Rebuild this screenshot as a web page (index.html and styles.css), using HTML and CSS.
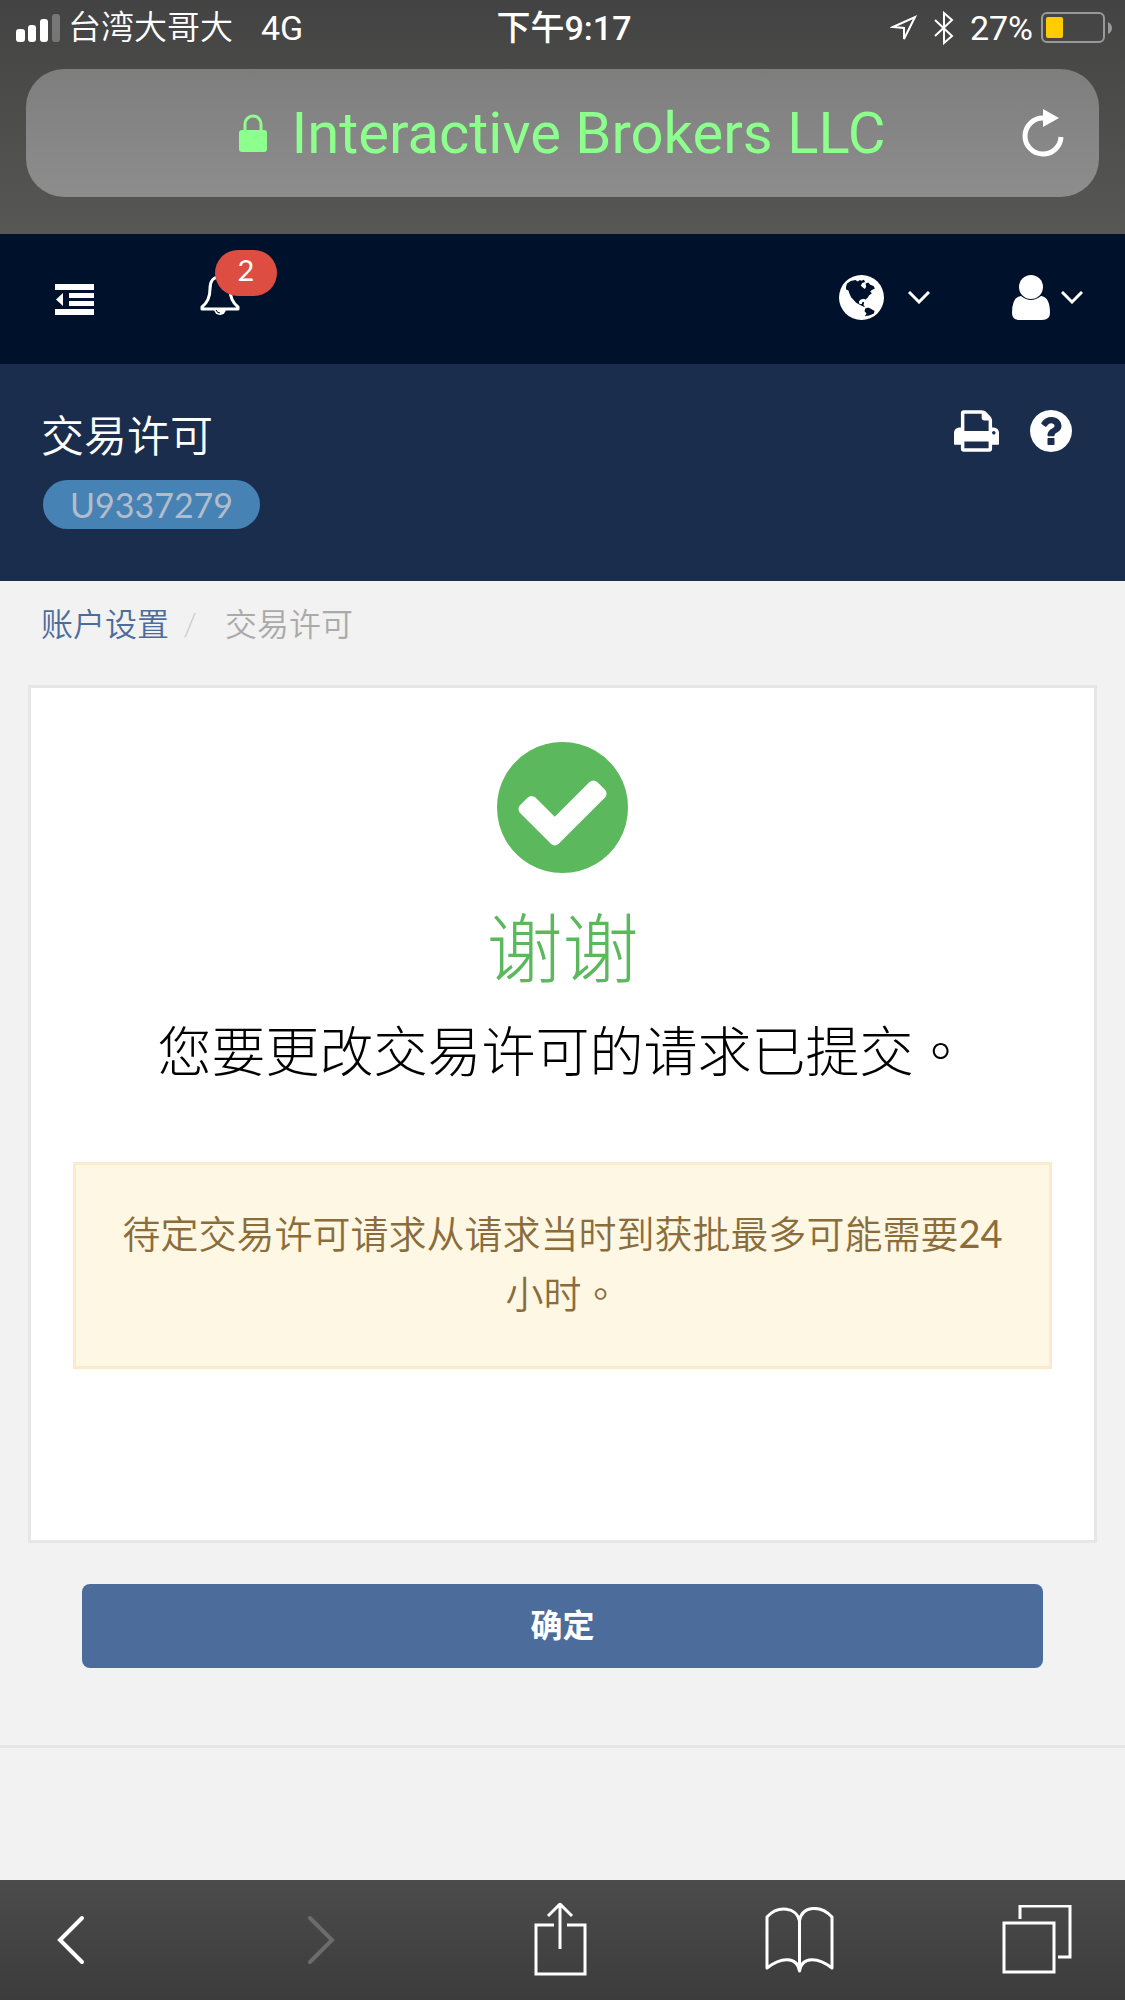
FILE: index.html
```
<!DOCTYPE html>
<html lang="zh-Hant">
<head>
  <meta charset="UTF-8">
  <meta name="viewport" content="width=device-width, initial-scale=1.0">
  <title>交易许可</title>
  <link rel="stylesheet" href="styles.css">
</head>
<body>

<header class="browser-top">
  <div class="status-bar">
    <div class="status-left">
      <svg class="signal" width="44" height="28" viewBox="0 0 44 28" fill="#fff">
        <rect x="0" y="15" width="9" height="13" rx="3"/>
        <rect x="12" y="11" width="8" height="17" rx="3"/>
        <rect x="24" y="5" width="8" height="23" rx="3"/>
        <rect x="36" y="0" width="8" height="28" rx="3" fill="#777"/>
      </svg>
      <span class="carrier">台湾大哥大</span>
      <span class="network">4G</span>
    </div>
    <div class="time">下午9:17</div>
    <div class="status-right">
      <svg width="28" height="28" viewBox="0 0 28 28" fill="none" stroke="#fff" stroke-width="2">
        <path d="M3 13L25 3L14 25L14 14Z"/>
      </svg>
      <svg width="20" height="34" viewBox="0 0 20 34" fill="none" stroke="#fff" stroke-width="2">
        <path d="M1 9L18 25L10 32V2L18 9L1 25"/>
      </svg>
      <span class="battery-text">27%</span>
      <svg class="battery" width="71" height="32" viewBox="0 0 71 32">
        <rect x="1" y="1" width="62" height="29" rx="5" fill="none" stroke="#999" stroke-width="2"/>
        <rect x="5" y="5" width="17" height="21" rx="2" fill="#fc0"/>
        <path d="M67 10q4 2 4 6t-4 6z" fill="#999"/>
      </svg>
    </div>
  </div>

  <div class="address-bar">
    <div class="site">
      <svg width="28" height="38" viewBox="0 0 28 38">
        <rect x="0" y="16" width="28" height="22" rx="3" fill="#8cff8c"/>
        <path d="M6 17V10a8 8 0 0 1 16 0v7" fill="none" stroke="#8cff8c" stroke-width="3"/>
      </svg>
      <span>Interactive Brokers LLC</span>
    </div>
    <button class="icon-btn reload" type="button" aria-label="重新载入">
      <svg width="42" height="48" viewBox="0 0 42 48">
        <path d="M39 28A18 18 0 1 1 21 9" fill="none" stroke="#fff" stroke-width="5"/>
        <path d="M21 0L37 9L21 18Z" fill="#fff"/>
      </svg>
    </button>
  </div>
</header>

<nav class="navbar">
  <button class="icon-btn" type="button" aria-label="菜单">
    <svg width="39" height="31" viewBox="0 0 39 31" fill="#fff">
      <path d="M0 0h39v6H0zM14 9h25v5H14zM14 17h25v5H14zM0 25h39v6H0zM8 9v13L1 15.500z"/>
    </svg>
  </button>
  <button class="icon-btn bell" type="button" aria-label="通知">
    <svg width="40" height="44" viewBox="0 0 40 44">
      <path d="M20 5C12 5 10 10 10 17C10 26 7 31 2 35V37H38V35C33 31 30 26 30 17C30 10 28 5 20 5Z" fill="none" stroke="#fff" stroke-width="3" stroke-linejoin="round"/>
      <path d="M14 37h12a6 6 0 0 1-12 0z" fill="#fff"/>
      <path d="M16 38q1 3 4 3" fill="none" stroke="#00122b" stroke-width="1"/>
      <path d="M20 2v3" stroke="#fff" stroke-width="4" stroke-linecap="round"/>
    </svg>
    <span class="badge">2</span>
  </button>
  <button class="icon-btn language" type="button" aria-label="语言">
    <svg width="45" height="45" viewBox="115 133 134 134">
      <circle cx="182" cy="200" r="67" fill="#fff"/>
      <path fill="#00122b" d="M136 168L139 158L150 151L164 148L171 152L177 148L182 150L189 147L193 154L184 157L180 165L186 170L192 175L196 168L194 158L202 155L208 162L218 166L222 173L213 178L208 182L213 187L205 193L200 201L193 207L190 204L180 206L174 212L176 219L183 219L185 213L190 214L188 222L193 229L187 227L178 222L166 216L158 207L151 199L146 188L143 179L136 176Z"/>
      <path fill="#00122b" d="M193 233L202 230L211 234L221 240L219 248L207 253L192 256L197 248L191 241Z"/>
    </svg>
    <svg width="22" height="13" viewBox="0 0 22 13" fill="none" stroke="#fff" stroke-width="3"><path d="M1 1l10 10L21 1"/></svg>
  </button>
  <button class="icon-btn user" type="button" aria-label="用户">
    <svg width="38" height="45" viewBox="0 0 38 45" fill="#fff">
      <circle cx="19" cy="12" r="12"/>
      <path d="M9 21q10 8 20 0q9 1 9 17q0 7-8 7H8q-8 0-8-7q0-16 9-17z"/>
    </svg>
    <svg width="22" height="13" viewBox="0 0 22 13" fill="none" stroke="#fff" stroke-width="3"><path d="M1 1l10 10L21 1"/></svg>
  </button>
</nav>

<section class="page-header">
  <div>
    <h1>交易许可</h1>
    <span class="account">U9337279</span>
  </div>
  <div class="page-tools">
    <button class="icon-btn" type="button" aria-label="打印">
      <svg width="45" height="42" viewBox="0 0 1664 1536" fill="#fff">
        <path d="M384 1408h896v-256h-896v256zm0-640h896v-384h-160q-40 0-68-28t-28-68v-160h-640v640zm1152 64q0-26-19-45t-45-19-45 19-19 45 19 45 45 19 45-19 19-45zm128 0v416q0 13-9.500 22.500t-22.500 9.500h-224v160q0 40-28 68t-68 28h-960q-40 0-68-28t-28-68v-160h-224q-13 0-22.500-9.500t-9.500-22.500v-416q0-79 56.500-135.500t135.500-56.500h64v-544q0-40 28-68t68-28h672q40 0 88 20t76 48l152 152q28 28 48 76t20 88v256h64q79 0 135.500 56.500t56.500 135.500z"/>
      </svg>
    </button>
    <button class="icon-btn" type="button" aria-label="帮助">
      <svg width="42" height="42" viewBox="0 0 1536 1536" fill="#fff">
        <path d="M896 1248v-192q0-14-9-23t-23-9h-192q-14 0-23 9t-9 23v192q0 14 9 23t23 9h192q14 0 23-9t9-23zm256-672q0-88-55.500-163t-138.500-116-170-41q-243 0-371 213-15 24 8 42l132 100q7 6 19 6 16 0 25-12 53-68 86-92 34-24 86-24 48 0 85.500 26t37.500 59q0 38-20 61t-68 45q-63 28-115.500 86.500t-52.500 125.500v36q0 14 9 23t23 9h192q14 0 23-9t9-23q0-19 21.500-49.500t54.500-49.500q32-18 49-28.500t46-35 44.500-48 28-60.500 12.500-81zm384 192q0 209-103 385.500t-279.500 279.500-385.500 103-385.500-103-279.500-279.500-103-385.500 103-385.500 279.500-279.500 385.500-103 385.500 103 279.500 279.500 103 385.500z"/>
      </svg>
    </button>
  </div>
</section>

<main>
  <div class="breadcrumb">
    <a href="#">账户设置</a>
    <span class="slash">/</span>
    <span>交易许可</span>
  </div>

  <div class="card">
    <svg class="check" width="131" height="131" viewBox="0 0 1536 1536" fill="#5cb85c">
      <path d="M1284 606q0-28-18-46l-91-90q-19-19-45-19t-45 19l-408 407-226-226q-19-19-45-19t-45 19l-91 90q-18 18-18 46 0 27 18 45l362 362q19 19 45 19 27 0 46-19l543-543q18-18 18-45zm252 162q0 209-103 385.500t-279.500 279.500-385.500 103-385.500-103-279.500-279.500-103-385.500 103-385.500 279.500-279.500 385.500-103 385.500 103 279.500 279.500 103 385.500z"/>
    </svg>
    <h2>谢谢</h2>
    <p class="message">您要更改交易许可的请求已提交。</p>
    <div class="alert">待定交易许可请求从请求当时到获批最多可能需要<span class="hours">24</span>小时。</div>
  </div>

  <div class="actions">
    <button class="btn-primary" type="button">确定</button>
  </div>
</main>

<footer class="toolbar">
  <button class="icon-btn" type="button" aria-label="后退">
    <svg width="28" height="52" viewBox="0 0 28 52" fill="none" stroke="#fff" stroke-width="4" stroke-linecap="round"><path d="M25 4L3 26L25 48"/></svg>
  </button>
  <button class="icon-btn" type="button" aria-label="前进" disabled>
    <svg width="28" height="52" viewBox="0 0 28 52" fill="none" stroke="#6c6c6c" stroke-width="4" stroke-linecap="round"><path d="M3 4L25 26L3 48"/></svg>
  </button>
  <button class="icon-btn" type="button" aria-label="分享">
    <svg width="53" height="74" viewBox="0 0 53 74" fill="none" stroke="#fff" stroke-width="3">
      <path d="M20 22H2V71H51V22H33M26 1V46M14 13L26 1L38 13"/>
    </svg>
  </button>
  <button class="icon-btn" type="button" aria-label="书签">
    <svg width="69" height="66" viewBox="0 0 69 66" fill="none" stroke="#fff" stroke-width="3" stroke-linejoin="round">
      <path d="M34.500 14V64C32 49 16 50 2 61V10C13-2 32 0 34.500 14C37-2 56-2 67 10V61C53 50 37 49 34.500 64"/>
    </svg>
  </button>
  <button class="icon-btn" type="button" aria-label="标签页">
    <svg width="70" height="70" viewBox="0 0 70 70" fill="none" stroke="#fff" stroke-width="3">
      <path d="M2 18H52V67H2ZM18 14V1H68V52H56"/>
    </svg>
  </button>
</footer>

</body>
</html>
```
FILE: styles.css
```
:root {
  --nav-color: #00122b;
  --header-color: #1a2d4d;
  --primary-color: #4c6c9b;
  --success-color: #5cb85c;
  --page-color: #f2f2f2;
  --border-color: #e6e6e6;
}

* {
  margin: 0;
  padding: 0;
  box-sizing: border-box;
}

body {
  background-color: var(--page-color);
  font-family: Lato, "Noto Sans CJK TC", sans-serif;
  font-weight: 400;
  min-height: 100vh;
  display: flex;
  flex-direction: column;
}

svg {
  display: block;
  flex: none;
}

.icon-btn {
  background: none;
  border: none;
  cursor: pointer;
  display: flex;
  align-items: center;
}

/* Browser chrome */
.browser-top {
  background: linear-gradient(#434343, #575755);
  color: #fff;
  font-family: Roboto, "Noto Sans CJK TC", sans-serif;
  padding-bottom: 37px;
}

.status-bar {
  display: grid;
  grid-template-columns: 1fr auto 1fr;
  align-items: center;
  height: 56px;
  padding: 0 13px 0 16px;
  font-size: 34px;
  line-height: 40px;
}

.status-left,
.status-right {
  display: flex;
  align-items: center;
}

.carrier {
  margin-left: 8px;
  font-size: 33px;
  font-weight: 350;
}

.network {
  margin-left: 28px;
}

.time {
  font-weight: 500;
}

.status-right {
  justify-content: flex-end;
  gap: 16px;
}

.battery {
  margin-left: -8px;
}

.address-bar {
  display: grid;
  grid-template-columns: 1fr auto 1fr;
  align-items: center;
  height: 128px;
  margin: 13px 26px 0;
  padding: 0 35px;
  border-radius: 38px;
  background: linear-gradient(#7e7e7e, #8d8d8e);
}

.site {
  grid-column: 2;
  display: flex;
  align-items: center;
  gap: 24px;
  color: #8cff8c;
  font-size: 58px;
}

.reload {
  justify-self: end;
}

/* Site navigation */
.navbar {
  display: flex;
  align-items: center;
  height: 130px;
  padding: 0 42px 0 55px;
  background-color: var(--nav-color);
}

.bell {
  position: relative;
  margin-left: 106px;
  padding-bottom: 10px;
}

.badge {
  position: absolute;
  left: 15px;
  bottom: 30px;
  width: 62px;
  height: 46px;
  border-radius: 23px;
  background-color: #dd4d42;
  color: #fff;
  font: 400 29px/40px Lato, sans-serif;
}

.language,
.user {
  padding-bottom: 4px;
}

.language {
  margin-left: auto;
  gap: 24px;
}

.user {
  margin-left: 82px;
  gap: 11px;
}

.page-header {
  display: flex;
  justify-content: space-between;
  align-items: flex-start;
  padding: 40px 53px 52px 41px;
  background-color: var(--header-color);
}

.page-header h1 {
  color: #fff;
  font-size: 43px;
  font-weight: 350;
  line-height: 64px;
}

.account {
  display: inline-block;
  margin: 12px 2px 0;
  padding: 0 27px;
  border-radius: 25px;
  background-color: #4682b4;
  color: #b3bccb;
  font-size: 34px;
  line-height: 49px;
}

.page-tools {
  display: flex;
  gap: 31px;
  padding-top: 6px;
}

/* Content */
main {
  flex: 1;
}

.breadcrumb {
  display: flex;
  padding: 19px 41px;
  color: #aaa;
  font-size: 32px;
  font-weight: 350;
  line-height: 48px;
}

.breadcrumb a {
  color: var(--primary-color);
  text-decoration: none;
}

.slash {
  margin: 0 28px 0 14px;
  color: #ccc;
}

.card {
  margin: 18px 28px 0;
  padding: 54px 42px 171px;
  border: 3px solid var(--border-color);
  background-color: #fff;
  text-align: center;
}

.check {
  margin: 0 auto;
}

.card h2 {
  margin-top: 22px;
  color: var(--success-color);
  font-size: 76px;
  font-weight: 300;
  line-height: 106px;
}

.message {
  margin-top: 11px;
  color: #000;
  font-size: 54px;
  font-weight: 300;
  line-height: 80px;
}

.alert {
  margin-top: 70px;
  padding: 38px 44px 43px;
  border: 3px solid #faebcc;
  background-color: #fdf7e3;
  color: #8a6d3b;
  font-size: 38px;
  font-weight: 350;
  line-height: 60px;
}

.hours {
  font-weight: 400;
}

.actions {
  padding: 41px 82px 77px;
  border-bottom: 3px solid var(--border-color);
}

.btn-primary {
  width: 100%;
  padding: 17px 18px 19px;
  border: none;
  border-radius: 8px;
  background-color: var(--primary-color);
  color: #fff;
  cursor: pointer;
  font-family: inherit;
  font-size: 32px;
  font-weight: 700;
  line-height: 48px;
}

.toolbar {
  display: grid;
  grid-template-columns: 250fr 227fr 231fr 237fr 70fr;
  align-items: center;
  justify-items: start;
  height: 120px;
  padding: 0 53px 0 57px;
  background: linear-gradient(#4b4b4b, #3c3c3c);
}
```
